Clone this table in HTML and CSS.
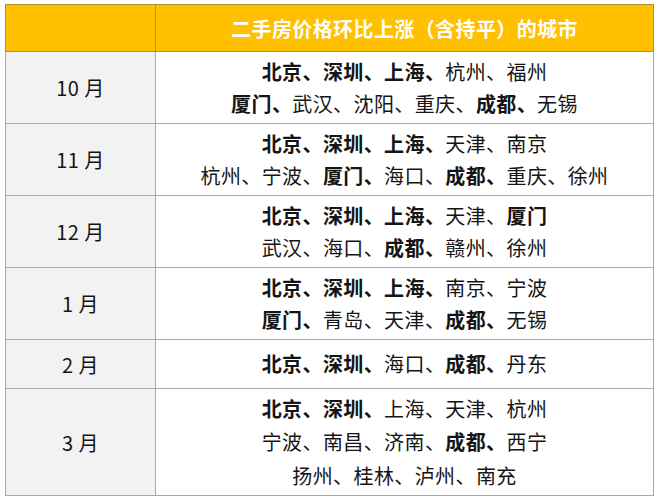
FILE: index.html
```html
<!DOCTYPE html>
<html lang="zh-CN">
<head>
<meta charset="utf-8">
<link rel="stylesheet" href="styles.css">
</head>
<body>
<table class="tbl">
  <colgroup><col class="c-month"><col class="c-city"></colgroup>
  <thead>
    <tr class="r-head"><th class="h-month"></th><th class="h-city">二手房价格环比上涨（含持平）的城市</th></tr>
  </thead>
  <tbody>
    <tr class="r2">
      <td class="month">10 月</td>
      <td class="cities">
        <div><b>北京、深圳、上海、</b>杭州、福州</div>
        <div><b>厦门、</b>武汉、沈阳、重庆、<b>成都、</b>无锡</div>
      </td>
    </tr>
    <tr class="r2">
      <td class="month">11 月</td>
      <td class="cities">
        <div><b>北京、深圳、上海、</b>天津、南京</div>
        <div>杭州、宁波、<b>厦门、</b>海口、<b>成都、</b>重庆、徐州</div>
      </td>
    </tr>
    <tr class="r2">
      <td class="month">12 月</td>
      <td class="cities">
        <div><b>北京、深圳、上海、</b>天津、<b>厦门</b></div>
        <div>武汉、海口、<b>成都、</b>赣州、徐州</div>
      </td>
    </tr>
    <tr class="r2">
      <td class="month">1 月</td>
      <td class="cities">
        <div><b>北京、深圳、上海、</b>南京、宁波</div>
        <div><b>厦门、</b>青岛、天津、<b>成都、</b>无锡</div>
      </td>
    </tr>
    <tr class="r1">
      <td class="month">2 月</td>
      <td class="cities">
        <div><b>北京、深圳、</b>海口、<b>成都、</b>丹东</div>
      </td>
    </tr>
    <tr class="r3">
      <td class="month">3 月</td>
      <td class="cities">
        <div><b>北京、深圳、</b>上海、天津、杭州</div>
        <div>宁波、南昌、济南、<b>成都、</b>西宁</div>
        <div>扬州、桂林、泸州、南充</div>
      </td>
    </tr>
  </tbody>
</table>
</body>
</html>
```
FILE: styles.css
```css
html, body {
  margin: 0;
  padding: 0;
  background: #ffffff;
}
body {
  padding: 4px 0 0 5px;
  font-family: "Noto Sans CJK SC", "Noto Sans", sans-serif;
  color: #151515;
}
.tbl {
  border-collapse: collapse;
  width: 648px;
  table-layout: fixed;
}
.c-month { width: 150px; }
.c-city { width: 498px; }
.tbl th, .tbl td {
  padding: 0;
  border: 1px solid #a8a8a8;
  text-align: center;
  vertical-align: middle;
}
.r-head { height: 47px; }
.r-head th {
  background: #ffc000;
  border-color: #b39232;
  color: #ffffff;
  font-weight: 700;
  font-size: 20px;
  letter-spacing: 0.4px;
}
.r2 { height: 72px; }
.r1 { height: 49px; }
.r3 { height: 107px; }
.month {
  background: #f2f2f2;
  font-size: 20px;
  letter-spacing: 0.5px;
}
.cities {
  background: #ffffff;
  font-size: 20px;
  letter-spacing: 0.4px;
}
.cities div {
  line-height: 32px;
}
.r3 .cities div {
  line-height: 33.5px;
}
.cities b {
  font-weight: 700;
}
```
